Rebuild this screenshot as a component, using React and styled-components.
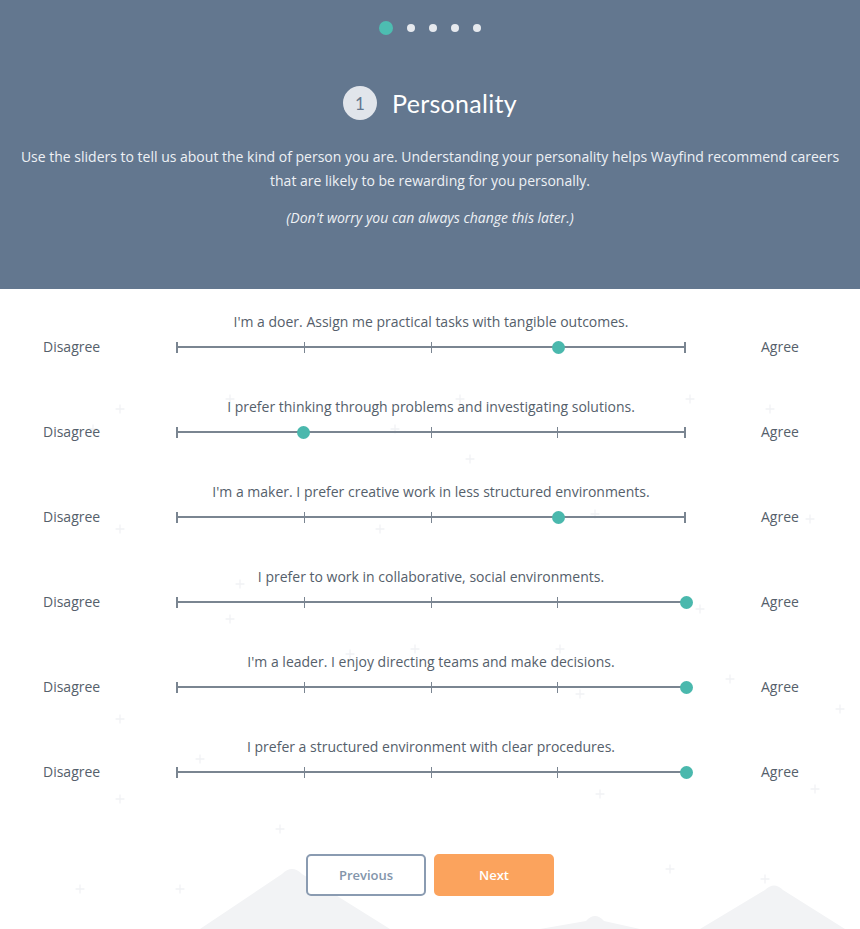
import styled, { createGlobalStyle } from "styled-components";

const GlobalStyle = createGlobalStyle`
  body {
    margin: 0;
    background: #ffffff;
    font-family: "Open Sans", "Liberation Sans", sans-serif;
  }
`;

const Page = styled.div`
  position: relative;
  min-height: 929px;
  overflow: hidden;
  background: #ffffff;
`;

const Backdrop = styled.svg`
  position: absolute;
  left: 0;
  top: 289px;
  width: 860px;
  height: 640px;
  pointer-events: none;
`;

const Header = styled.header`
  position: relative;
  height: 289px;
  box-sizing: border-box;
  padding-top: 21px;
  background: #63778f;
  color: #ffffff;
  text-align: center;
`;

const Dots = styled.div`
  display: flex;
  justify-content: center;
  align-items: center;
  gap: 14px;
  height: 14px;
`;

const Dot = styled.span`
  display: block;
  width: ${(p) => (p.active ? "14px" : "8px")};
  height: ${(p) => (p.active ? "14px" : "8px")};
  border-radius: 50%;
  background: ${(p) => (p.active ? "#4dbdb1" : "#e6e9ee")};
`;

const TitleRow = styled.div`
  display: flex;
  justify-content: center;
  align-items: center;
  gap: 15px;
  margin-top: 51px;
`;

const StepBadge = styled.span`
  display: flex;
  align-items: center;
  justify-content: center;
  width: 34px;
  height: 34px;
  border-radius: 50%;
  background: #e1e5eb;
  color: #63778f;
  font-family: Lato, "Open Sans", sans-serif;
  font-size: 17px;
`;

const Title = styled.h1`
  margin: 0;
  font-family: Lato, "Open Sans", sans-serif;
  font-weight: 400;
  font-size: 25px;
  letter-spacing: 0.3px;
  color: #ffffff;
`;

const Intro = styled.p`
  margin: 25px 0 0;
  padding: 0 16px;
  font-size: 14px;
  line-height: 24px;
  color: #eef1f5;
`;

const Note = styled.p`
  margin: 13px 0 0;
  font-size: 14px;
  line-height: 24px;
  font-style: italic;
  color: #eef1f5;
`;

const Questions = styled.section`
  position: relative;
  padding: 22px 0 0 43px;
`;

const Row = styled.div`
  display: grid;
  grid-template-columns: 133px 510px 1fr;
  grid-template-rows: 22px 22px;
  row-gap: 3px;
  align-items: center;
  margin-bottom: ${(p) => (p.last ? "0" : "38px")};
`;

const Question = styled.div`
  grid-column: 2;
  grid-row: 1;
  text-align: center;
  white-space: nowrap;
  font-size: 14px;
  line-height: 22px;
  color: #55606b;
`;

const Label = styled.div`
  grid-column: ${(p) => (p.right ? 3 : 1)};
  grid-row: 2;
  font-size: 14px;
  line-height: 22px;
  color: #55606b;
  padding-left: ${(p) => (p.right ? "75px" : "0")};
`;

const Slider = styled.div`
  grid-column: 2;
  grid-row: 2;
  position: relative;
  height: 22px;
  display: flex;
  justify-content: space-between;
  align-items: center;
  background: linear-gradient(#7a8591, #7a8591) center / 100% 2px no-repeat;
`;

const Tick = styled.span`
  display: block;
  width: ${(p) => (p.end ? "2px" : "1px")};
  height: 11px;
  background: #7a8591;
`;

const Thumb = styled.span`
  position: absolute;
  top: 50%;
  width: 13px;
  height: 13px;
  margin: -6.5px 0 0 -6.5px;
  border-radius: 50%;
  background: #4ab8ad;
`;

const Actions = styled.div`
  position: relative;
  display: flex;
  justify-content: center;
  gap: 8px;
  margin-top: 71px;
`;

const Button = styled.button`
  width: 120px;
  height: 42px;
  box-sizing: border-box;
  border-radius: 5px;
  font-family: "Open Sans", sans-serif;
  font-weight: 600;
  font-size: 13px;
  cursor: pointer;
  border: 2px solid ${(p) => (p.primary ? "#fba35d" : "#8a9bb1")};
  background: ${(p) => (p.primary ? "#fba35d" : "#ffffff")};
  color: ${(p) => (p.primary ? "#ffffff" : "#8395ab")};
`;

const questions = [
  { text: "I'm a doer. Assign me practical tasks with tangible outcomes.", value: 3 },
  { text: "I prefer thinking through problems and investigating solutions.", value: 1 },
  { text: "I'm a maker. I prefer creative work in less structured environments.", value: 3 },
  { text: "I prefer to work in collaborative, social environments.", value: 4 },
  { text: "I'm a leader. I enjoy directing teams and make decisions.", value: 4 },
  { text: "I prefer a structured environment with clear procedures.", value: 4 },
];

const sparkles = [
  [120, 120], [230, 110], [460, 110], [690, 110], [770, 120], [93, 140], [395, 140],
  [470, 170], [120, 240], [380, 240], [595, 225], [810, 230], [240, 295], [230, 330],
  [415, 360], [560, 360], [700, 320], [120, 430], [730, 390], [840, 420], [200, 470],
  [120, 510], [280, 540], [600, 505], [815, 500], [80, 600], [180, 600], [670, 580],
  [765, 590], [350, 365], [580, 405],
];

function Sparkle({ x, y }) {
  return (
    <path
      d={`M${x - 4} ${y}H${x + 4}M${x} ${y - 4}V${y + 4}`}
      stroke="#f1f2f5"
      strokeWidth="1.3"
      strokeLinecap="round"
    />
  );
}

function App() {
  return (
    <Page>
      <GlobalStyle />
      <Backdrop viewBox="0 0 860 640">
        {sparkles.map(([x, y], i) => (
          <Sparkle key={i} x={x} y={y} />
        ))}
        <path d="M200 640 L282 585 Q292 575 302 585 L390 640 Z" fill="#f2f3f5" />
        <path d="M540 640 L586 632 Q595 622 604 632 L640 640 Z" fill="#f2f3f5" />
        <path d="M700 640 L765 601 Q774 592 783 601 L845 640 Z" fill="#f2f3f5" />
      </Backdrop>

      <Header>
        <Dots>
          <Dot active />
          <Dot />
          <Dot />
          <Dot />
          <Dot />
        </Dots>
        <TitleRow>
          <StepBadge>1</StepBadge>
          <Title>Personality</Title>
        </TitleRow>
        <Intro>
          Use the sliders to tell us about the kind of person you are. Understanding your
          personality helps Wayfind recommend careers
          <br />
          that are likely to be rewarding for you personally.
        </Intro>
        <Note>(Don't worry you can always change this later.)</Note>
      </Header>

      <Questions>
        {questions.map((q, i) => (
          <Row key={i} last={i === questions.length - 1}>
            <Question>{q.text}</Question>
            <Label>Disagree</Label>
            <Slider>
              <Tick end />
              <Tick />
              <Tick />
              <Tick />
              <Tick end />
              <Thumb style={{ left: `${q.value * 25}%` }} />
            </Slider>
            <Label right>Agree</Label>
          </Row>
        ))}
      </Questions>

      <Actions>
        <Button>Previous</Button>
        <Button primary>Next</Button>
      </Actions>
    </Page>
  );
}

export default App;
